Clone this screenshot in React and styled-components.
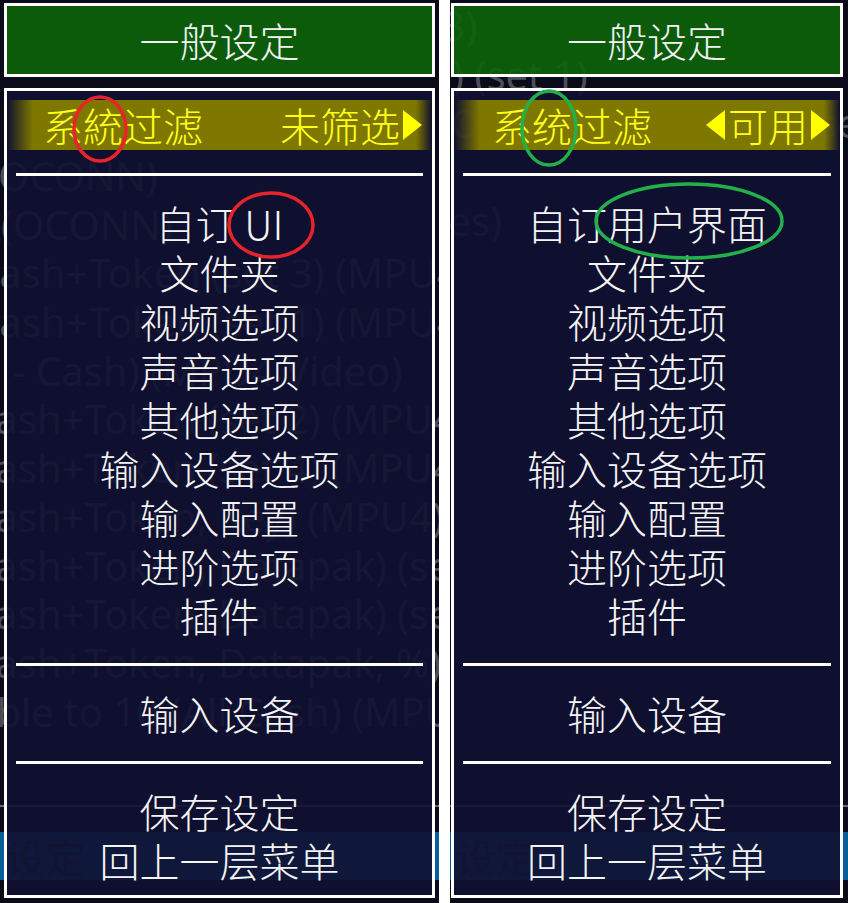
import React from 'react';
import styled, { createGlobalStyle } from 'styled-components';

const GlobalStyle = createGlobalStyle`
  html, body {
    margin: 0;
    padding: 0;
    background: #0a0a18;
  }
`;

const CJK = `"Noto Sans CJK SC", "Noto Sans CJK TC", sans-serif`;

const Page = styled.div`
  display: flex;
  width: 848px;
  height: 903px;
  overflow: hidden;
  background: #0a0a18;
`;

const Seam = styled.div`
  width: 11px;
  flex: none;
  background: #ffffff;
`;

const Screen = styled.div`
  position: relative;
  display: grid;
  grid-template-columns: minmax(0, 1fr);
  grid-template-rows: minmax(0, 1fr);
  flex: none;
  width: ${(p) => p.$w}px;
  height: 903px;
  overflow: hidden;
  background: #0a0a18;
  & > * {
    grid-area: 1 / 1;
    min-width: 0;
  }
`;

/* the game list that shows through the menu */
const Backdrop = styled.div`
  display: flex;
  flex-direction: column;
  overflow: hidden;
  padding-top: ${(p) => p.$top}px;
  font-family: "Noto Sans", "Open Sans", sans-serif;
  font-size: 40px;
  color: #4e4e5a;
  white-space: nowrap;
`;

const GhostRow = styled.div`
  height: 48.7px;
  line-height: 48.7px;
  flex: none;
  margin-left: ${(p) => p.$indent}px;
`;

const GhostRule = styled.div`
  flex: none;
  height: 2px;
  margin-top: ${(p) => p.$gap}px;
  background: #6a6a70;
`;

const StatusBar = styled.div`
  flex: none;
  height: 48px;
  margin-top: 25px;
  display: flex;
  align-items: center;
  padding-left: 6px;
  background: #0a5f98;
  font-family: ${CJK};
  color: #333340;
  font-size: 40px;
`;

const Overlay = styled.div`
  display: flex;
  flex-direction: column;
  gap: 11px;
  padding: 3px ${(p) => p.$padR}px 5px ${(p) => p.$padL}px;
  font-family: ${CJK};
  font-weight: 300;
`;

const Header = styled.div`
  box-sizing: border-box;
  height: 74px;
  flex: none;
  border: 3px solid #ffffff;
  background: rgba(11, 100, 10, 0.9);
  display: flex;
  align-items: center;
  justify-content: center;
  color: #f2f2f2;
  font-size: 40px;
  line-height: 68px;
`;

const Body = styled.div`
  box-sizing: border-box;
  flex: 1;
  min-height: 0;
  border: 3px solid #ffffff;
  background: rgba(16, 17, 49, 0.91);
  display: flex;
  flex-direction: column;
  padding-top: 9px;
`;

const SelectedRow = styled.div`
  height: 50px;
  flex: none;
  display: flex;
  align-items: center;
  justify-content: space-between;
  padding: 0 10px 0 ${(p) => p.$padL}px;
  background: linear-gradient(
    90deg,
    rgba(127, 120, 0, 0) 0,
    #7f7800 26px,
    #7f7800 calc(100% - 16px),
    rgba(127, 120, 0, 0) 100%
  );
  color: #ffff1a;
  font-size: 40px;
  line-height: 50px;
  white-space: nowrap;
`;

const Value = styled.span`
  display: flex;
  align-items: center;
  gap: 3px;
`;

const Arrow = styled.span`
  width: 0;
  height: 0;
  border-top: 15px solid transparent;
  border-bottom: 15px solid transparent;
  ${(p) =>
    p.$dir === 'left'
      ? 'border-right: 19px solid #ffff00;'
      : 'border-left: 19px solid #ffff00;'}
`;

const RuleRow = styled.div`
  height: 49px;
  flex: none;
  display: flex;
  align-items: center;
  padding: 0 9px;
`;

const Rule = styled.div`
  flex: 1;
  height: 3px;
  background: #ffffff;
`;

const Item = styled.div`
  height: 49px;
  flex: none;
  text-align: center;
  color: #f4f4f4;
  font-size: 40px;
  line-height: 49px;
  white-space: nowrap;
`;

const Mark = styled.svg`
  position: absolute;
  left: ${(p) => p.$x}px;
  top: ${(p) => p.$y}px;
  overflow: visible;
  pointer-events: none;
`;

const Ring = ({ cx, cy, rx, ry, color }) => (
  <Mark $x={cx - rx} $y={cy - ry} width={rx * 2} height={ry * 2}>
    <ellipse cx={rx} cy={ry} rx={rx} ry={ry} fill="none" stroke={color} strokeWidth="3.5" />
  </Mark>
);

const RED = '#e8232b';
const GREEN = '#22b04a';

const ghostLeft = [
  { t: '(OCONN)', x: -14 },
  { t: 'R(OCONN)', x: -24 },
  { t: 'Cash+Token (set 3) (MPU4)', x: -26 },
  { t: 'Cash+Token (set 1) (MPU4)', x: -26 },
  { t: 'All - Cash) (MPU4 Video)', x: -44 },
  { t: 'Cash+Token (set 2) (MPU4)', x: -30 },
  { t: 'Cash+Token (set 4) (MPU4)', x: -30 },
  { t: 'Cash+Token, Key) (MPU4)', x: -30 },
  { t: 'Cash+Token, Datapak) (set 1)', x: -30 },
  { t: 'Cash+Token, Datapak) (set 2)', x: -30 },
  { t: 'Cash+Token, Datapak, %)', x: -30 },
  { t: 'able to 10 (All Cash) (MPU4)', x: -26 },
];

const ghostRight = [
  { t: '(set 3)', x: -86 },
  { t: ') (set 1)', x: 2 },
  { t: 'O (MPU4)   Datapak   (set 1)', x: 0 },
  { t: '', x: 0 },
  { t: 'ies)', x: -12 },
];

const items = ['文件夹', '视频选项', '声音选项', '其他选项', '输入设备选项', '输入配置', '进阶选项', '插件'];

const SettingsScreen = ({ width, padL, padR, labelPad, filterValue, uiLabel, ghost, ghostTop, rings }) => (
  <Screen $w={width}>
    <Backdrop $top={ghostTop}>
      {ghost.map((g, i) => (
        <GhostRow key={i} $indent={g.x}>{g.t}</GhostRow>
      ))}
      <GhostRule $gap={805 - ghostTop - ghost.length * 48.7} />
      <StatusBar>设定</StatusBar>
    </Backdrop>
    <Overlay $padL={padL} $padR={padR}>
      <Header>一般设定</Header>
      <Body>
        <SelectedRow $padL={labelPad}>
          <span>{filterValue.label}</span>
          <Value>
            {filterValue.both && <Arrow $dir="left" />}
            <span>{filterValue.text}</span>
            <Arrow $dir="right" />
          </Value>
        </SelectedRow>
        <RuleRow><Rule /></RuleRow>
        <Item>{uiLabel}</Item>
        {items.map((it) => (
          <Item key={it}>{it}</Item>
        ))}
        <RuleRow><Rule /></RuleRow>
        <Item>输入设备</Item>
        <RuleRow><Rule /></RuleRow>
        <Item>保存设定</Item>
        <Item>回上一层菜单</Item>
      </Body>
    </Overlay>
    {rings.map((r, i) => (
      <Ring key={i} {...r} />
    ))}
  </Screen>
);

const App = () => (
  <Page>
    <GlobalStyle />
    <SettingsScreen
      width={439}
      padL={4}
      padR={4}
      labelPad={36}
      filterValue={{ label: '系統过滤', text: '未筛选', both: false }}
      uiLabel="自订 UI"
      ghost={ghostLeft}
      ghostTop={152}
      rings={[
        { cx: 100, cy: 129, rx: 26, ry: 32, color: RED },
        { cx: 271, cy: 225, rx: 42, ry: 32, color: RED },
      ]}
    />
    <Seam />
    <SettingsScreen
      width={398}
      padL={1}
      padR={5}
      labelPad={38}
      filterValue={{ label: '系统过滤', text: '可用', both: true }}
      uiLabel="自订用户界面"
      ghost={ghostRight}
      ghostTop={2}
      rings={[
        { cx: 99, cy: 128, rx: 27, ry: 37, color: GREEN },
        { cx: 239, cy: 221, rx: 93, ry: 37, color: GREEN },
      ]}
    />
  </Page>
);

export default App;
